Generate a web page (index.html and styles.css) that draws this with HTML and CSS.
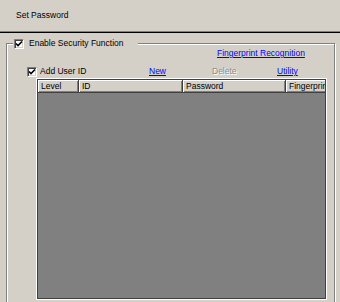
FILE: index.html
```html
<!DOCTYPE html>
<html>
<head>
    <title>Set Password</title>
    <link rel="stylesheet" href="styles.css">
</head>
<body>
    <div class="title">Set Password</div>

    <fieldset class="group">
        <legend class="group-title">
            <span class="check"><svg width="8" height="8" viewBox="0 0 8 8"><path d="M1 3.5 L3 5.5 L7 1.5" fill="none" stroke="#000" stroke-width="1.6"/></svg></span>
            Enable Security Function
        </legend>

        <div class="fp-row"><a href="#" class="link">Fingerprint Recognition</a></div>

        <div class="user-row">
            <label class="check-label">
                <span class="check"><svg width="8" height="8" viewBox="0 0 8 8"><path d="M1 3.5 L3 5.5 L7 1.5" fill="none" stroke="#000" stroke-width="1.6"/></svg></span>
                <span class="txt">Add User ID</span>
            </label>
            <a href="#" class="link txt">New</a>
            <span class="disabled txt">Delete</span>
            <a href="#" class="link txt">Utility</a>
        </div>

        <div class="list">
            <div class="list-head">
                <div class="col col-level">Level</div>
                <div class="col col-id">ID</div>
                <div class="col col-pass">Password</div>
                <div class="col col-fp">Fingerprint</div>
            </div>
            <div class="list-body"></div>
        </div>
    </fieldset>
</body>
</html>
```

FILE: styles.css
```css
body { margin: 0; background: #d4d0c8; font-family: "Liberation Sans", Arial, sans-serif; font-size: 8.5px; color: #000; overflow: hidden; }
.title { height: 21px; padding: 10px 0 0 16px; line-height: 10px; border-bottom: 1px solid #808080; box-shadow: 0 1px 0 #000; }
.group { margin: 5px 5px 0 6px; padding: 0 0 10px 0; border: 1px solid #808080; box-shadow: 1px 1px 0 #fff, inset 1px 1px 0 #fff; min-width: 0; }
.group-title { display: flex; align-items: center; height: 13px; width: 124px; margin-left: 6px; padding: 0 0 0 1px; background: #d4d0c8; line-height: 13px; white-space: nowrap; }
.check { display: inline-flex; align-items: center; justify-content: center; width: 8px; height: 8px; background: #fff; border: 1px solid; border-color: #808080 #fff #fff #808080; box-shadow: inset 1px 1px 0 #404040, inset -1px -1px 0 #d4d0c8; padding: 0; flex: none; }
.check svg { display: block; }
.group-title .check { margin-right: 5px; }
.fp-row { margin-top: -2px; padding-left: 210px; line-height: 10px; }
.link { color: #0000ff; text-decoration: underline; }
.user-row { display: grid; grid-template-columns: 122px 63px 65px auto; align-items: center; height: 12px; margin-top: 8px; padding-left: 20px; line-height: 10px; }
.check-label { display: flex; align-items: center; }
.check-label .check { margin-right: 3px; }
.txt { padding-bottom: 2px; }
.disabled { color: #8c8c8c; text-shadow: 1px 1px 0 #fff; }
.list { margin: 1px 8px 0 30px; height: 218px; border: 1px solid #404040; box-shadow: 0 0 0 1px #fff; background: #808080; display: flex; flex-direction: column; overflow: hidden; }
.list-head { display: flex; height: 13px; flex: none; white-space: nowrap; }
.col { box-sizing: border-box; height: 13px; padding-left: 3px; line-height: 12px; background: #d4d0c8; border-right: 1px solid #404040; border-bottom: 1px solid #404040; box-shadow: inset 1px 1px 0 #fff, inset -1px -1px 0 #808080; flex: none; }
.col-level { width: 41px; }
.col-id { width: 104px; }
.col-pass { width: 103px; }
.col-fp { width: 60px; }
.list-body { flex: 1; }
```
